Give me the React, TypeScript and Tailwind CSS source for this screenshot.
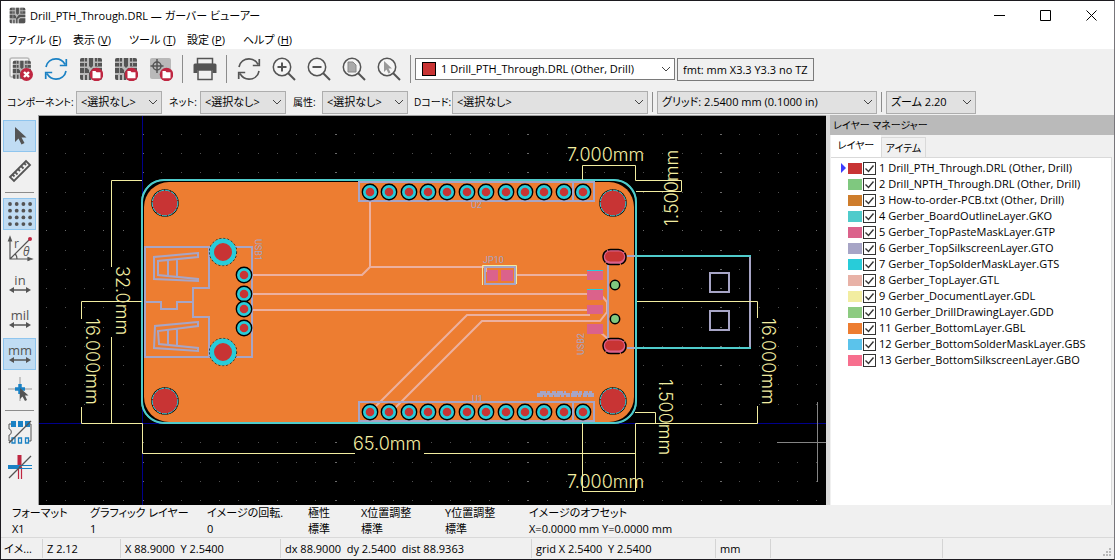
import type { ReactNode } from 'react';

const layers = [
    { name: '1 Drill_PTH_Through.DRL (Other, Drill)', color: '#c83434' },
    { name: '2 Drill_NPTH_Through.DRL (Other, Drill)', color: '#7fc87f' },
    { name: '3 How-to-order-PCB.txt (Other, Drill)', color: '#ce7d2c' },
    { name: '4 Gerber_BoardOutlineLayer.GKO', color: '#4fcbcb' },
    { name: '5 Gerber_TopPasteMaskLayer.GTP', color: '#db628b' },
    { name: '6 Gerber_TopSilkscreenLayer.GTO', color: '#a7a5c6' },
    { name: '7 Gerber_TopSolderMaskLayer.GTS', color: '#28ccd9' },
    { name: '8 Gerber_TopLayer.GTL', color: '#e8b2a7' },
    { name: '9 Gerber_DocumentLayer.GDL', color: '#f2eda1' },
    { name: '10 Gerber_DrillDrawingLayer.GDD', color: '#8dcb81' },
    { name: '11 Gerber_BottomLayer.GBL', color: '#ed7d31' },
    { name: '12 Gerber_BottomSolderMaskLayer.GBS', color: '#5bc3eb' },
    { name: '13 Gerber_BottomSilkscreenLayer.GBO', color: '#f76f8e' },
];

const menus = [
    { label: 'ファイル', hotkey: 'F', width: 'w-[65px]' },
    { label: '表示', hotkey: 'V', width: 'w-[56px]' },
    { label: 'ツール', hotkey: 'T', width: 'w-[58px]' },
    { label: '設定', hotkey: 'P', width: 'w-[56px]' },
    { label: 'ヘルプ', hotkey: 'H', width: 'w-[60px]' },
];

const messages = [
    { title: 'フォーマット', value: 'X1', width: 'w-[78px]' },
    { title: 'グラフィック レイヤー', value: '1', width: 'w-[117px]' },
    { title: 'イメージの回転.', value: '0', width: 'w-[101px]' },
    { title: '極性', value: '標準', width: 'w-[53px]' },
    { title: 'X位置調整', value: '標準', width: 'w-[84px]' },
    { title: 'Y位置調整', value: '標準', width: 'w-[84px]' },
    { title: 'イメージのオフセット', value: 'X=0.0000 mm Y=0.0000 mm', width: 'w-[200px]' },
];

const Svg = ({ size = 'size-6', children }: { size?: string; children: ReactNode }) => (
    <svg viewBox="0 0 24 24" className={`${size} shrink-0`} fill="none" stroke="#545454" strokeWidth="1.5" aria-hidden="true">
        {children}
    </svg>
);

const Board = () => (
    <>
        <rect x="1" y="1" width="22" height="22" rx="2" fill="#b9b9b9" stroke="none" />
        <path d="M3 1h5v3.500H1V3a2 2 0 0 1 2 -2zM1 6h7v3.500H1zM1 11h7l2 2v3H1zM10 1h4v8l-2 2l-2 -2zM16 1h5a2 2 0 0 1 2 2v1.500h-7zM16 6h7v3.500h-7zM14 11h9v3h-7l-4 3v6h-2v-7zM1 18h3v5H3a2 2 0 0 1 -2 -2zM6 18h2v5H6zM14 18l2 -2h7v5a2 2 0 0 1 -2 2h-7z" fill="#545454" stroke="none" />
        <path d="M5.500 1v15M18.500 1v8" stroke="#b9b9b9" strokeWidth=".8" />
    </>
);

const Badge = () => (
    <>
        <circle cx="17.5" cy="17.5" r="6.8" fill="#bf2641" stroke="none" />
        <path d="M13.5 14h3l1 1.3h4v6h-8z" fill="#fff" stroke="none" />
    </>
);

const ClearIcon = () => (
    <Svg>
        <rect x="1" y="1" width="19" height="19" rx="2" fill="#f5f5f5" stroke="#b9b9b9" />
        <g transform="translate(3 3) scale(.82)"><Board /></g>
        <circle cx="17.5" cy="17.5" r="6.5" fill="#bf2641" stroke="none" />
        <path d="M15 15l5 5M20 15l-5 5" stroke="#fff" strokeWidth="2.4" />
    </Svg>
);

const RefreshIcon = ({ color }: { color: string }) => (
    <Svg>
        <g stroke={color} strokeWidth="1.7">
            <path d="M2 10C3 4.500 7.500 1.800 12 1.800c4 0 7 2 9 5.500M22.300 2v6.500h-6.500" />
            <path d="M22 14c-1 5.500 -5.500 8.200 -10 8.200c-4 0 -7 -2 -9 -5.500M1.700 22v-6.500h6.500" />
        </g>
    </Svg>
);

const OpenIcon = () => (
    <Svg>
        <Board />
        <Badge />
    </Svg>
);

const OpenJobIcon = () => (
    <Svg>
        <rect x="1" y="1" width="21" height="21" rx="2" fill="#b9b9b9" stroke="none" />
        <circle cx="8" cy="9" r="4" />
        <path d="M8 2v14M1.500 9h13" />
        <Badge />
    </Svg>
);

const PrintIcon = () => (
    <Svg>
        <rect x="4.500" y="1.500" width="15" height="6" fill="#f0f0f0" />
        <path d="M2 6.500h20a1.500 1.500 0 0 1 1.500 1.500v8h-4v-3h-15v3h-4v-8a1.500 1.500 0 0 1 1.500 -1.500z" fill="#545454" stroke="none" />
        <rect x="5" y="13" width="14" height="9.500" fill="#f0f0f0" />
    </Svg>
);

const Lens = ({ children }: { children: ReactNode }) => (
    <Svg>
        <circle cx="10" cy="10" r="8.700" fill="#f6f6f6" />
        <path d="M16 16l7 7" strokeWidth="2" />
        {children}
    </Svg>
);

const UnitIcon = ({ unit }: { unit: string }) => (
    <svg viewBox="0 0 26 26" className="size-[26px] overflow-visible" fill="#545454" aria-hidden="true">
        <text x="13" y="14" textAnchor="middle" fontSize="13" fontFamily="'Open Sans', sans-serif">{unit}</text>
        <path d="M2 19l5 -3v2.200h12v-2.200l5 3l-5 3v-2.200h-12v2.200z" />
    </svg>
);

const ToolButton = ({ label, children }: { label: string; children: ReactNode }) => (
    <button type="button" aria-label={label} className="flex h-8 w-[35px] shrink-0 items-center justify-center">
        {children}
    </button>
);

const SideButton = ({ label, active, children }: { label: string; active?: boolean; children: ReactNode }) => (
    <button
        type="button"
        aria-label={label}
        aria-pressed={!!active}
        className={`flex h-8 w-[33px] shrink-0 items-center justify-center border ${active ? 'border-[#8fc5ee] bg-[#c0dcf3]' : 'border-transparent'}`}
    >
        {children}
    </button>
);

const Divider = () => <div className="mx-1 h-7 w-px shrink-0 bg-[#8c8c8c]" />;

const Chevron = () => (
    <svg viewBox="0 0 10 6" className="pointer-events-none col-start-1 row-start-1 mr-1 h-[6px] w-[10px] justify-self-end" fill="none" stroke="#444" aria-hidden="true">
        <path d="M1 1l4 4l4 -4" />
    </svg>
);

const Combo = ({ id, value, className, label }: { id: string; value: string; className: string; label?: string }) => (
    <div className={`grid shrink-0 items-center ${className}`}>
        <select
            id={id}
            aria-label={label}
            className="col-start-1 row-start-1 h-[23px] w-full appearance-none border border-[#adadad] bg-[#e1e1e1] pr-5 pl-1 text-[11px]"
        >
            <option>{value}</option>
        </select>
        <Chevron />
    </div>
);

const padsX = Array.from({ length: 12 }, (_, i) => 370 + Math.round(i * 19.36));
const dots = Array.from({ length: 41 * 21 }, (_, i) => ({ col: (i % 41) - 5, row: Math.floor(i / 41) - 15 }));

const Pad = ({ x, y }: { x: number; y: number }) => (
    <g>
        <circle cx={x} cy={y} r="8.400" fill="#000" />
        <circle cx={x} cy={y} r="7" fill="#28ccd9" />
        <circle cx={x} cy={y} r="4.300" fill="#c83434" />
    </g>
);

const Dimension = ({ x, y, rotate = 0, children }: { x: number; y: number; rotate?: number; children: string }) => (
    <text transform={`translate(${x} ${y}) rotate(${rotate})`} fill="#f2eda1" fontSize="18" fontWeight="300" fontFamily="Inter, sans-serif">
        {children}
    </text>
);

const BoardView = () => (
    <svg className="block size-full" role="img" aria-label="PCB" fill="none">
        <g transform="translate(-39 -116)">
            {dots.map(({ col, row }) => (
                <rect
                    key={`${col}:${row}`}
                    x={Math.round(142 + col * 19.27)}
                    y={Math.round(423 + row * 19.27)}
                    width={col % 10 === 0 ? 2 : 1}
                    height="1"
                    fill={col % 10 === 0 || row % 10 === 0 ? '#6a6a6a' : '#505050'}
                />
            ))}
            <path d="M142.500 116V1200M39 423.500H2400" stroke="#00008b" />

            <rect x="142" y="180" width="494" height="243" rx="22" fill="#000" stroke="#4fcbcb" strokeWidth="2" />
            <rect x="144" y="182" width="490" height="240" rx="25" fill="#ed7d31" />
            <path d="M142 201a22 22 0 0 1 22 -21M614 180a22 22 0 0 1 22 22M636 401a22 22 0 0 1 -22 22M164 423a22 22 0 0 1 -22 -22" stroke="#4fcbcb" strokeWidth="1.500" />

            {/* copper traces */}
            <g stroke="#ecb09f" strokeWidth="2">
                <path d="M252 275H362L370 267V199M370 267H486V272M516 275H590M252 294H590M252 310H590" />
                <path d="M590 315H467L374 408M602 296L607 302V312L600 321H482L394 409M600 332L608 339" />
            </g>

            {/* silkscreen */}
            <g stroke="#a7a5c6" strokeWidth="2">
                <path d="M145 247H252V357H145ZM209 247V288H193V317H209V357M145 302H161V309H177V302H193" />
                <path d="M198 253L154 257V279L198 281V279L158 275V261L198 257ZM168 260V276M177 259V277" />
                <path d="M198 322L155 326L154 348L198 351V348L159 344L158 331L198 326ZM168 329V345M177 328V346" />
                <path d="M359 182H594V201H359ZM359 402H594V421H359Z" />
                <path d="M485 267H515V284H485ZM608 264V340" />
                <path d="M710 273H729V292H710ZM710 311H729V330H710Z" />
            </g>
            <path d="M482.500 285V265.500H516.500V284" stroke="#f2eda1" />
            <path d="M537 395H594M540 393H566M572 393H592" stroke="#a7a5c6" strokeWidth="4" strokeDasharray="6 1 3 2 4 1" />
            <g fill="#a7a5c6" fontSize="9" fontFamily="Roboto, sans-serif">
                <text x="471" y="208">U2</text>
                <text x="472" y="402">U1</text>
                <text x="483" y="263">JP10</text>
                <text transform="translate(255 239) rotate(90)">USB1</text>
                <text transform="translate(584 355) rotate(-90)">USB2</text>
            </g>

            {[[165, 203], [613, 203], [165, 401], [613, 401]].map(([x, y]) => (
                <g key={`${x}:${y}`}>
                    <circle cx={x} cy={y} r="13.800" fill="#000" />
                    <circle cx={x} cy={y} r="12.800" fill="#c83434" stroke="#28ccd9" strokeDasharray="5 1" />
                </g>
            ))}
            {[252, 352].map((y) => (
                <g key={y}>
                    <circle cx="223" cy={y} r="13.600" stroke="#000" strokeDasharray="2 2" />
                    <circle cx="223" cy={y} r="11.200" fill="#c83434" stroke="#28ccd9" strokeWidth="4.400" />
                </g>
            ))}
            {[275, 294, 309, 328].map((y) => <Pad key={y} x={244} y={y} />)}
            {padsX.map((x) => <Pad key={x} x={x} y={192} />)}
            {padsX.map((x) => <Pad key={x} x={x} y={412} />)}
            <path d="M573 183V200M573 403V420" stroke="#a7a5c6" strokeWidth="2" />

            <path d="M487 270h11v11h-11zM501 270h12v11h-12zM587 270h16v10h-16zM587 290h16v10h-16zM587 305h16v9h-16zM587 324h16v10h-16z" fill="#db628b" />
            <path d="M587 270.500h16M587 289.500h16" stroke="#28ccd9" />
            <circle cx="615" cy="285" r="4.700" fill="#7fc87f" stroke="#000" strokeWidth="1.500" />
            <circle cx="615" cy="319" r="4.700" fill="#7fc87f" stroke="#000" strokeWidth="1.500" />

            {[257, 346].map((y) => (
                <g key={y}>
                    <rect x="603" y={y - 7.5} width="23" height="15" rx="7.500" fill="#db628b" stroke="#000" strokeWidth="1.500" strokeDasharray="14 1" />
                    <rect x="605" y={y - 5.5} width="19" height="10" rx="5" fill="#c83434" />
                </g>
            ))}
            <path d="M627 256H636M627 348H636M750 256V347" stroke="#a7a5c6" strokeWidth="2" />
            <path d="M636 256H751M636 348H751" stroke="#4fcbcb" strokeWidth="2" />
            <path d="M636 203V401" stroke="#4fcbcb" strokeWidth="2" />

            {/* dimension lines */}
            <g stroke="#f2eda1">
                <path d="M582.500 180V165.500H635.500V180.500H681.500V191.500H636" />
                <path d="M142 180.500H111.500V267M111.500 337V423M142 301.500H81.500V319M81.500 407V423.500H142.500V453.500H355M424 453.500H636" />
                <path d="M582.500 423V491.500H635.500V423.500H757.500V406M635 412.500H655.500V423M637 301.500H757.500V318" />
            </g>
            <Dimension x={567} y={161}>7.000mm</Dimension>
            <Dimension x={353} y={450}>65.0mm</Dimension>
            <Dimension x={567} y={488}>7.000mm</Dimension>
            <Dimension x={678} y={226} rotate={-90}>1.500mm</Dimension>
            <Dimension x={116} y={266} rotate={90}>32.0mm</Dimension>
            <Dimension x={86} y={318} rotate={90}>16.000mm</Dimension>
            <Dimension x={659} y={379} rotate={90}>1.500mm</Dimension>
            <Dimension x={762} y={318} rotate={90}>16.000mm</Dimension>

            <path d="M777 442.500H857M817.500 402V482" stroke="#848484" />
        </g>
    </svg>
);

const TitleBar = () => (
    <div className="flex h-[29px] shrink-0 items-center bg-white pl-2">
        <Svg size="size-[17px]"><Board /></Svg>
        <h1 className="flex-1 pl-1">Drill_PTH_Through.DRL — ガーバー ビューアー</h1>
        <button type="button" aria-label="最小化" className="flex h-full w-[46px] items-center justify-center">
            <svg className="size-[11px]" stroke="#000"><path d="M0 5.500h11" /></svg>
        </button>
        <button type="button" aria-label="最大化" className="flex h-full w-[46px] items-center justify-center">
            <svg className="size-[11px]" stroke="#000" fill="none"><path d="M.5 .5h10v10h-10z" /></svg>
        </button>
        <button type="button" aria-label="閉じる" className="flex h-full w-[46px] items-center justify-center">
            <svg className="size-[11px]" stroke="#000"><path d="M.5 .5l10 10M10.500 .5l-10 10" /></svg>
        </button>
    </div>
);

const MainToolbar = () => (
    <div className="flex h-10 shrink-0 items-center pl-[2px]">
        <ToolButton label="クリア"><ClearIcon /></ToolButton>
        <ToolButton label="再読み込み"><RefreshIcon color="#1a81c4" /></ToolButton>
        <ToolButton label="ガーバーを開く"><OpenIcon /></ToolButton>
        <ToolButton label="ドリルを開く"><OpenIcon /></ToolButton>
        <ToolButton label="ジョブを開く"><OpenJobIcon /></ToolButton>
        <Divider />
        <ToolButton label="印刷"><PrintIcon /></ToolButton>
        <Divider />
        <ToolButton label="再描画"><RefreshIcon color="#545454" /></ToolButton>
        <ToolButton label="拡大"><Lens><path d="M5.500 10h9M10 5.500v9" strokeWidth="2" /></Lens></ToolButton>
        <ToolButton label="縮小"><Lens><path d="M5.500 10h9" strokeWidth="2" /></Lens></ToolButton>
        <ToolButton label="全体表示"><Lens><path d="M6 5h5l3 3v7h-8z" fill="#aaa" stroke="#888" strokeWidth="1" /></Lens></ToolButton>
        <ToolButton label="選択範囲を拡大"><Lens><path d="M7 4v11l2.500 -2.500l2 4l2 -1l-2 -4h3.500z" fill="#999" stroke="none" /></Lens></ToolButton>
        <Divider />
        <div className="grid w-[260px] shrink-0 items-center">
            <select id="layer" aria-label="レイヤー" className="col-start-1 row-start-1 h-[22px] w-full appearance-none border border-[#7a7a7a] bg-white pr-5 pl-[25px]">
                {layers.map((layer) => <option key={layer.name}>{layer.name}</option>)}
            </select>
            <div className="pointer-events-none col-start-1 row-start-1 ml-[7px] size-[14px] border border-black bg-[#c83434]" />
            <Chevron />
        </div>
        <input readOnly aria-label="フォーマット" value="fmt: mm X3.3 Y3.3 no TZ" className="ml-[2px] h-[23px] w-[137px] border border-[#7a7a7a] bg-[#f0f0f0] px-[5px]" />
    </div>
);

const FilterToolbar = () => (
    <div className="flex h-[26px] shrink-0 items-center pl-[6px] text-[10px]">
        <label htmlFor="component" className="w-[69px] shrink-0 whitespace-nowrap">コンポーネント:</label>
        <Combo id="component" value="<選択なし>" className="w-[86px]" />
        <label htmlFor="net" className="w-[38px] shrink-0 pl-[7px] whitespace-nowrap">ネット:</label>
        <Combo id="net" value="<選択なし>" className="w-[86px]" />
        <label htmlFor="attr" className="w-[36px] shrink-0 pl-[7px] whitespace-nowrap">属性:</label>
        <Combo id="attr" value="<選択なし>" className="w-[86px]" />
        <label htmlFor="dcode" className="w-11 shrink-0 pl-[6px] whitespace-nowrap">Dコード:</label>
        <Combo id="dcode" value="<選択なし>" className="w-[196px]" />
        <div className="mx-1 h-5 w-px shrink-0 bg-[#8c8c8c]" />
        <Combo id="grid" label="グリッド" value="グリッド: 2.5400 mm (0.1000 in)" className="w-[220px]" />
        <div className="mx-1 h-5 w-px shrink-0 bg-[#8c8c8c]" />
        <Combo id="zoom" label="ズーム" value="ズーム 2.20" className="w-[90px]" />
    </div>
);

const SideToolbar = () => (
    <div className="flex w-[37px] shrink-0 flex-col items-center gap-[3px] pt-[5px]">
        <SideButton label="選択" active>
            <Svg><path d="M7 3v15l3.500 -3.500l3 6l3 -1.500l-3 -5.500h5z" fill="#545454" stroke="none" /></Svg>
        </SideButton>
        <SideButton label="計測">
            <Svg><path d="M2 18L18 2l4 4L6 22zM7 13l2.500 2.500M10 10l2 2M13 7l2.500 2.500M16 4l2 2M4.500 15.500l2 2" strokeWidth="1.800" /></Svg>
        </SideButton>
        <div className="my-[2px] h-px w-[29px] shrink-0 bg-[#8c8c8c]" />
        <SideButton label="グリッド" active>
            <Svg>
                {Array.from({ length: 16 }, (_, i) => (
                    <circle key={i} cx={2 + (i % 4) * 6.7} cy={2 + Math.floor(i / 4) * 6.7} r="1.900" fill="#545454" stroke="none" />
                ))}
            </Svg>
        </SideButton>
        <SideButton label="極座標">
            <svg viewBox="0 0 26 26" className="size-[26px] overflow-visible" fill="none" stroke="#545454" aria-hidden="true">
                <path d="M3 3v20h20M3 23L22 4M1.500 5L3 1l1.500 4zM21 21.500l4 1.500l-4 1.500zM8 18c1.500 1 2 3 2 5" strokeWidth="1.200" />
                <circle cx="23" cy="3" r="2" fill="#bf2641" stroke="none" />
                <text x="7" y="12" fontSize="12" fill="#545454" stroke="none" fontFamily="'Open Sans', sans-serif">r</text>
                <text x="16" y="20" fontSize="12" fill="#545454" stroke="none" fontStyle="italic" fontFamily="'Open Sans', sans-serif">θ</text>
            </svg>
        </SideButton>
        <SideButton label="in"><UnitIcon unit="in" /></SideButton>
        <SideButton label="mil"><UnitIcon unit="mil" /></SideButton>
        <SideButton label="mm" active><UnitIcon unit="mm" /></SideButton>
        <SideButton label="カーソル">
            <Svg>
                <path d="M0 12h24M12 0v24" stroke="#999" strokeWidth="1" />
                <path d="M7 12h10M12 7v10" stroke="#1a81c4" strokeWidth="3.500" />
                <path d="M12 11v11l2.500 -2.500l2.500 4.500l2 -1l-2 -4.500h3.500z" fill="#545454" stroke="none" />
            </Svg>
        </SideButton>
        <div className="my-[2px] h-px w-[29px] shrink-0 bg-[#8c8c8c]" />
        <SideButton label="部品を強調">
            <Svg>
                <path d="M3 4H1v5c3 0 3 6 0 6v6h2M21 4h2v17h-2" strokeWidth="1" />
                <path d="M3 1h5v6H3zM10 1h5v6h-5zM17 1h5v6h-5z" fill="#1a81c4" stroke="none" />
                <path d="M4 18h3v5H4zM10.500 18h3v5h-3zM17.500 18h3v5h-3z" stroke="#1a81c4" strokeWidth="1.300" />
                <path d="M1 23L23 1" strokeWidth="1.200" />
            </Svg>
        </SideButton>
        <SideButton label="差分表示">
            <Svg>
                <path d="M11.500 0v14" stroke="#bf2641" strokeWidth="4" />
                <path d="M10.500 12v12M13.500 12v12" stroke="#bf2641" strokeWidth="1.200" />
                <path d="M0 12h11" stroke="#1a81c4" strokeWidth="4" />
                <path d="M11 10.500h13M11 13.500h13" stroke="#1a81c4" strokeWidth="1.200" />
                <path d="M1 23L23 1" strokeWidth="1.200" />
            </Svg>
        </SideButton>
    </div>
);

const LayerManager = () => (
    <aside className="flex w-[284px] shrink-0 flex-col">
        <h2 className="flex h-5 shrink-0 items-center bg-[#bababa] pl-[3px] text-[10px]">レイヤー マネージャー</h2>
        <div role="tablist" className="flex h-[22px] shrink-0 items-end pl-px text-[10px]">
            <button type="button" role="tab" aria-selected="true" className="h-[22px] w-[50px] bg-white pb-[2px]">レイヤー</button>
            <button type="button" role="tab" aria-selected="false" className="h-5 w-[45px] border border-b-0 border-[#d9d9d9]">アイテム</button>
        </div>
        <ul className="mr-[2px] ml-px flex-1 border-t border-r border-[#d9d9d9] bg-white pt-[2px]">
            {layers.map((layer, i) => (
                <li key={layer.name} className="flex h-4 items-center pl-[10px]">
                    <svg className="h-[10px] w-[7px] shrink-0" fill="#3c3cff" aria-hidden="true">{i === 0 && <path d="M0 0l5 5l-5 5z" />}</svg>
                    <span className="h-[11px] w-[14px] shrink-0" style={{ backgroundColor: layer.color }} />
                    <span className="ml-px grid size-[13px] shrink-0">
                        <input id={`layer-${i}`} type="checkbox" defaultChecked className="peer col-start-1 row-start-1 size-[13px] appearance-none border border-[#333] bg-white" />
                        <svg className="pointer-events-none invisible col-start-1 row-start-1 size-[13px] peer-checked:visible" fill="none" stroke="#333" strokeWidth="1.400" aria-hidden="true">
                            <path d="M2.500 6.500l3 3l5 -6" />
                        </svg>
                    </span>
                    <label htmlFor={`layer-${i}`} className="pl-[3px] whitespace-nowrap">{layer.name}</label>
                </li>
            ))}
        </ul>
    </aside>
);

const StatusBar = () => (
    <footer className="flex h-[22px] shrink-0 items-stretch border-t border-[#d9d9d9] py-px leading-5 whitespace-pre">
        <span className="w-[41px] pl-[3px]">イメ...</span>
        <span className="w-[78px] border-l border-[#d4d4d4] pl-1">Z 2.12</span>
        <span className="w-[160px] border-l border-[#d4d4d4] pl-1">X 88.9000  Y 2.5400</span>
        <span className="w-[251px] border-l border-[#d4d4d4] pl-1">dx 88.9000  dy 2.5400  dist 88.9363</span>
        <span className="w-[184px] border-l border-[#d4d4d4] pl-1">grid X 2.5400  Y 2.5400</span>
        <span className="w-[55px] border-l border-[#d4d4d4] pl-1">mm</span>
        <span className="w-[172px] border-l border-[#d4d4d4]" />
        <span className="flex flex-1 items-end justify-end border-l border-[#d4d4d4]">
            <svg className="mr-[2px] size-[10px]" fill="#b8b8b8" aria-hidden="true">
                <path d="M7 0h2v2H7zM7 3h2v2H7zM7 6h2v2H7zM4 3h2v2H4zM4 6h2v2H4zM1 6h2v2H1z" />
            </svg>
        </span>
    </footer>
);

export default function App() {
    return (
        <div className="flex h-screen flex-col overflow-hidden border border-[#1c1a1f] border-r-[#77757a] bg-[#f0f0f0] font-['Open_Sans','Noto_Sans_CJK_JP',sans-serif] text-[11px] leading-4 text-black [font-feature-settings:'palt']">
            <TitleBar />
            <nav className="flex h-[19px] shrink-0 items-center bg-white pl-[7px]">
                {menus.map((menu) => (
                    <button key={menu.hotkey} type="button" className={`${menu.width} text-left whitespace-nowrap`}>
                        {menu.label} (<u>{menu.hotkey}</u>)
                    </button>
                ))}
            </nav>
            <MainToolbar />
            <FilterToolbar />
            <div className="flex min-h-0 flex-1">
                <SideToolbar />
                <main className="min-w-0 flex-1 border-t border-l border-[#a0a0a0] bg-black">
                    <BoardView />
                </main>
                <div className="w-1 shrink-0 bg-[#d9d9d9]" />
                <LayerManager />
            </div>
            <section className="flex h-8 shrink-0 pl-[11px]">
                {messages.map((msg) => (
                    <dl key={msg.title} className={`${msg.width} shrink-0 whitespace-nowrap`}>
                        <dt>{msg.title}</dt>
                        <dd>{msg.value}</dd>
                    </dl>
                ))}
            </section>
            <StatusBar />
        </div>
    );
}
